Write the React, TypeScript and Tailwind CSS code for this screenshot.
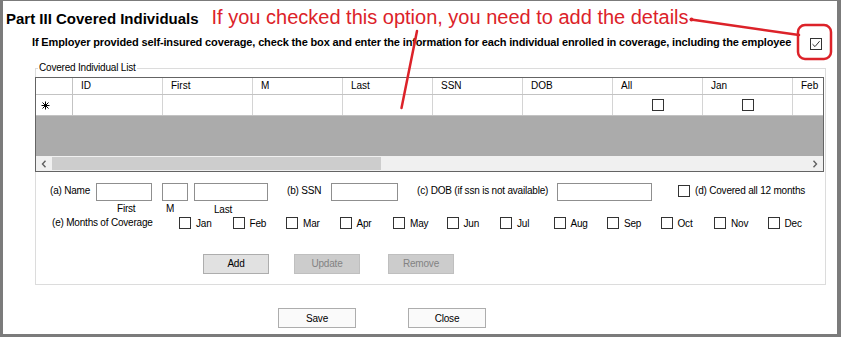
import React from "react";

const columns = ["ID", "First", "M", "Last", "SSN", "DOB", "All", "Jan", "Feb"];
const months = ["Jan", "Feb", "Mar", "Apr", "May", "Jun", "Jul", "Aug", "Sep", "Oct", "Nov", "Dec"];

function CheckBox({ checked = false }: { checked?: boolean }) {
  return (
    <span className="flex h-[12px] w-[12px] shrink-0 items-center justify-center border border-[#333333] bg-white">
      {checked && (
        <svg width="10" height="10" viewBox="0 0 10 10">
          <path d="M1.5 5.2 L4 7.6 L8.6 2.2" fill="none" stroke="#333333" strokeWidth="1" />
        </svg>
      )}
    </span>
  );
}

function TextBox({ width }: { width: string }) {
  return <div className={`h-[18px] border border-[#8f8f8f] bg-white ${width}`} />;
}

function NewRowGlyph() {
  return (
    <svg width="9" height="9" viewBox="0 0 9 9">
      <g stroke="#000" strokeWidth="1">
        <path d="M4.5 0.5 V8.5" />
        <path d="M0.5 4.5 H8.5" />
        <path d="M1.5 1.5 L7.5 7.5" />
        <path d="M7.5 1.5 L1.5 7.5" />
      </g>
    </svg>
  );
}

function Chevron({ dir }: { dir: "left" | "right" }) {
  return (
    <svg width="6" height="8" viewBox="0 0 6 8">
      <path
        d={dir === "left" ? "M4.5 0.8 L1.5 4 L4.5 7.2" : "M1.5 0.8 L4.5 4 L1.5 7.2"}
        fill="none"
        stroke="#606060"
        strokeWidth="1.4"
      />
    </svg>
  );
}

export default function App() {
  return (
    <div className="h-[337px] w-[841px] bg-[#7b7b7b] pb-[3px] pl-[3px] pr-[4px] pt-px font-['Liberation_Sans',Arial,sans-serif] text-black">
      <div className="relative h-full overflow-hidden bg-white">
        {/* title + note */}
        <div className="flex items-baseline pl-[3px] pt-[4px]">
          <h1 className="text-[15px] font-bold leading-[18px]">Part III Covered Individuals</h1>
          <span className="ml-[13px] text-[20px] leading-[24px] text-[#dc2229]">
            If you checked this option, you need to add the details
          </span>
        </div>

        {/* instruction */}
        <div className="mt-[7px] flex h-[14px] items-start">
          <p className="ml-[29px] text-[11px] font-bold leading-[12px] tracking-[-0.14px]">
            If Employer provided self-insured coverage, check the box and enter the information for each individual enrolled in coverage, including the employee
          </p>
          <span className="ml-auto mr-[15px] mt-[2px] flex">
            <CheckBox checked />
          </span>
        </div>

        {/* covered individual list */}
        <fieldset className="ml-[32px] mt-[12px] h-[223px] w-[791px] border border-[#dcdcdc] text-[10px] leading-[12px] tracking-[-0.2px]">
          <legend className="ml-[2px] px-[1px]">Covered Individual List</legend>

          <div className="-ml-px mt-[3px] w-[789px] overflow-hidden border border-[#646464] tracking-normal">
            <div className="flex h-[17px] border-b border-[#c3c3c3] bg-white">
              <div className="w-[37px] shrink-0 border-r border-[#c3c3c3]" />
              {columns.map((c) => (
                <div key={c} className="flex w-[90px] shrink-0 items-center border-r border-[#d4d4d4] pl-[8px]">
                  {c}
                </div>
              ))}
            </div>
            <div className="flex h-[21px] border-b border-[#c3c3c3] bg-white">
              <div className="flex w-[37px] shrink-0 items-center border-r border-[#c3c3c3] pl-[5px]">
                <NewRowGlyph />
              </div>
              {columns.map((c) => (
                <div key={c} className="flex w-[90px] shrink-0 items-center justify-center border-r border-[#d4d4d4]">
                  {(c === "All" || c === "Jan") && <CheckBox />}
                </div>
              ))}
            </div>
            <div className="h-[40px] bg-[#ababab]" />
            <div className="flex h-[15px] items-center bg-[#f0f0f0]">
              <span className="flex w-[16px] justify-center">
                <Chevron dir="left" />
              </span>
              <div className="h-[13px] w-[329px] bg-[#cdcdcd]" />
              <span className="ml-auto flex w-[16px] justify-center">
                <Chevron dir="right" />
              </span>
            </div>
          </div>

          {/* (a) - (d) */}
          <div className="mt-[11px] flex items-start">
            <span className="ml-[14px] w-[46px] pt-[2px]">(a) Name</span>
            <TextBox width="w-[56px]" />
            <div className="ml-[10px]"><TextBox width="w-[26px]" /></div>
            <div className="ml-[6px]"><TextBox width="w-[74px]" /></div>
            <span className="ml-[19px] w-[44px] pt-[2px]">(b) SSN</span>
            <TextBox width="w-[67px]" />
            <span className="ml-[19px] w-[140px] pt-[2px]">(c) DOB (if ssn is not available)</span>
            <TextBox width="w-[95px]" />
            <span className="ml-[26px] mt-[2px] flex"><CheckBox /></span>
            <span className="ml-[5px] pt-[2px]">(d) Covered all 12 months</span>
          </div>
          <div className="mt-[2px] flex">
            <span className="ml-[81px] w-[49px]">First</span>
            <span className="w-[48px]">M</span>
            <span className="pt-[1px]">Last</span>
          </div>

          {/* (e) months */}
          <div className="flex items-start">
            <span className="ml-[16px] w-[127px] pt-[1px]">(e) Months of Coverage</span>
            <div className="grid grid-cols-[repeat(12,53.5px)]">
              {months.map((m) => (
                <div key={m} className="flex items-start">
                  <span className="mt-[1px] flex"><CheckBox /></span>
                  <span className="ml-[5px] pt-[2px]">{m}</span>
                </div>
              ))}
            </div>
          </div>

          <div className="mt-[24px] flex">
            <button className="ml-[167px] h-[20px] w-[66px] border border-[#adadad] bg-[#e1e1e1]">Add</button>
            <button disabled className="ml-[25px] h-[20px] w-[66px] border border-[#bfbfbf] bg-[#cccccc] text-[#838383]">Update</button>
            <button disabled className="ml-[28px] h-[20px] w-[66px] border border-[#bfbfbf] bg-[#cccccc] text-[#838383]">Remove</button>
          </div>
        </fieldset>

        <div className="mt-[23px] flex text-[10px] tracking-[-0.2px]">
          <button className="ml-[275px] h-[20px] w-[78px] border border-[#adadad] bg-[#fafafa]">Save</button>
          <button className="ml-[52px] h-[20px] w-[78px] border border-[#adadad] bg-[#fafafa]">Close</button>
        </div>

        {/* red callouts drawn over the form */}
        <svg className="pointer-events-none absolute left-0 top-0" width="834" height="333">
          <g stroke="#dc2229" fill="none" strokeLinecap="round">
            <path d="M688 18.5 L796 34" strokeWidth="2.5" />
            <path d="M414 30 L398.5 107" strokeWidth="2.5" />
            <rect x="795" y="24" width="33" height="34" rx="7" strokeWidth="2.5" />
          </g>
          <circle cx="688.5" cy="18.5" r="2" fill="#dc2229" />
        </svg>
      </div>
    </div>
  );
}
